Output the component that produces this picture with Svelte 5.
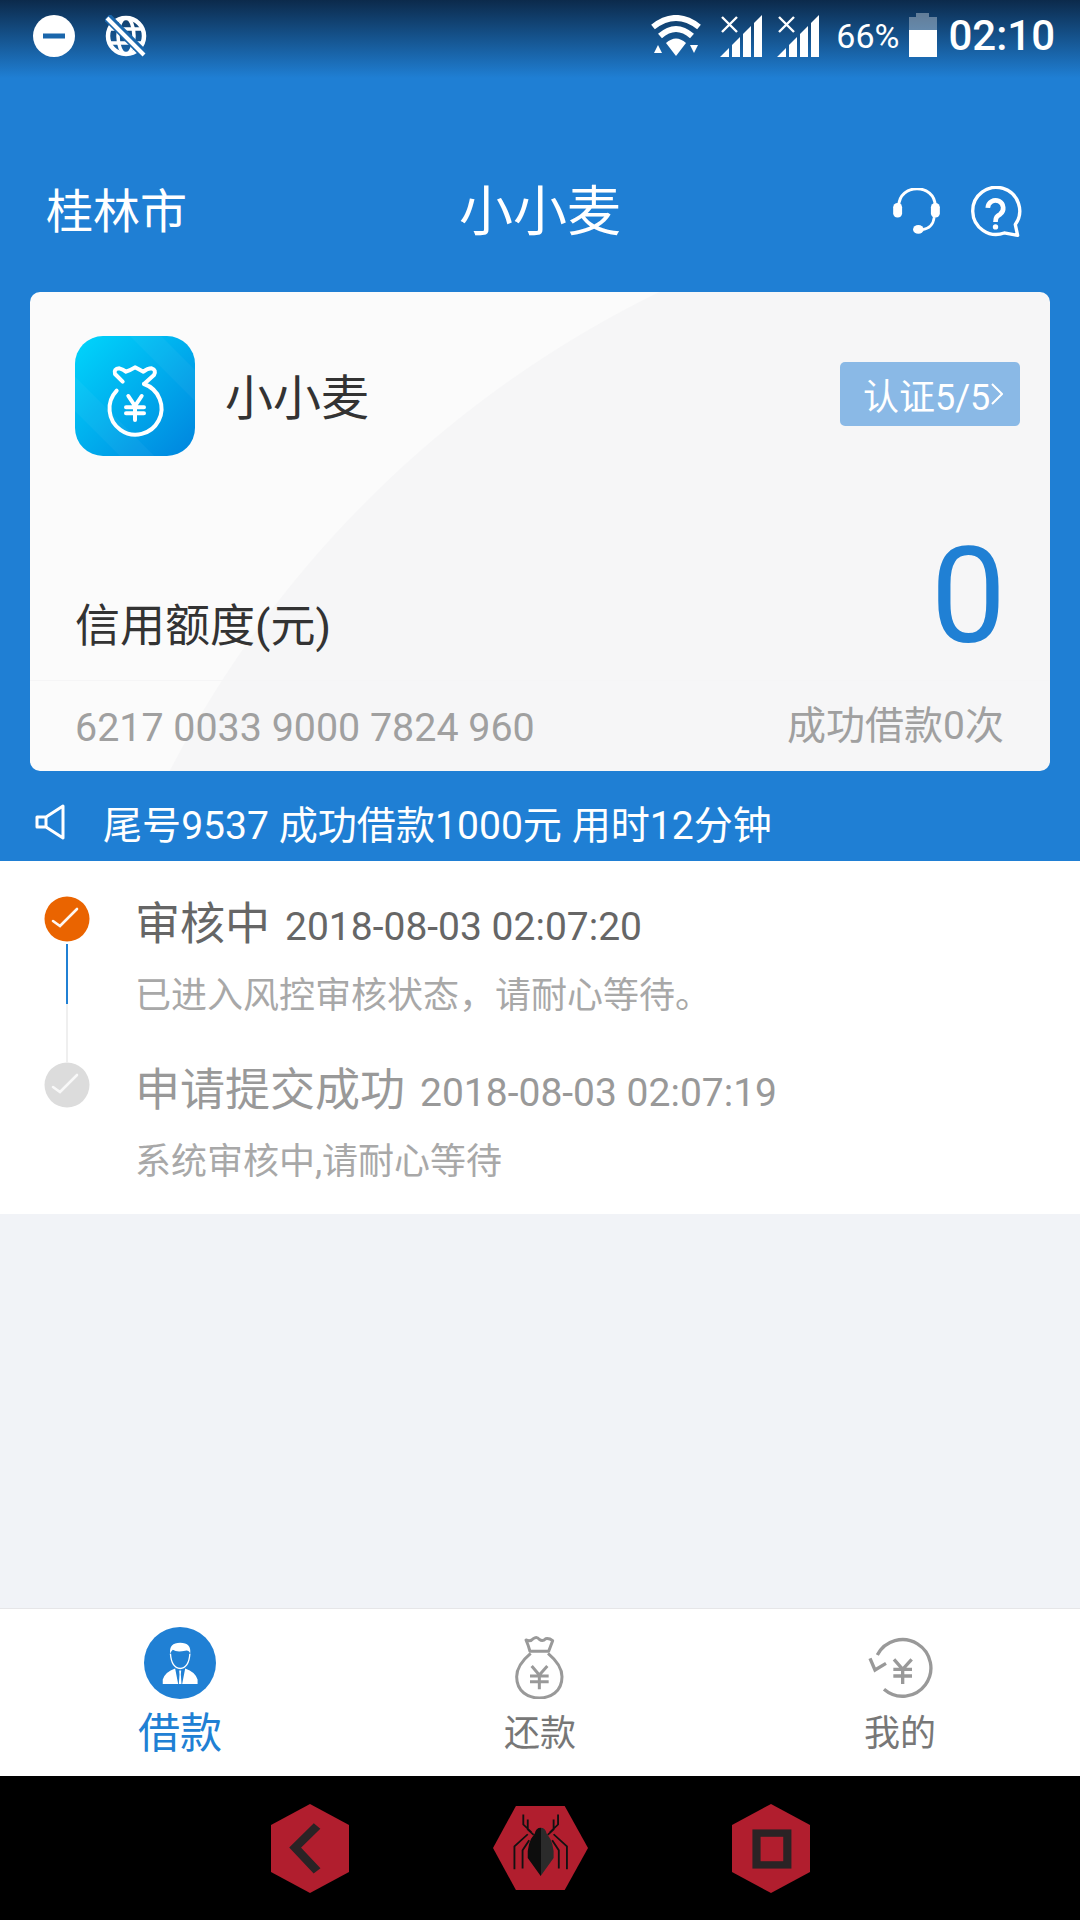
<script lang="ts">
	const steps = [
		{ title: '审核中', time: '2018-08-03 02:07:20', desc: '已进入风控审核状态，请耐心等待。', active: true },
		{ title: '申请提交成功', time: '2018-08-03 02:07:19', desc: '系统审核中,请耐心等待', active: false }
	];
	const signals = [0, 1];
</script>

<div class="page">
	<header class="hero">
		<div class="status">
			<div class="status-left">
				<svg width="42" height="42" viewBox="0 0 42 42">
					<circle cx="21" cy="21" r="21" fill="#fff" />
					<rect x="10" y="18.5" width="22" height="5" fill="#1a66ab" />
				</svg>
				<svg width="42" height="42" viewBox="0 0 42 42" fill="none" stroke="#fff">
					<circle cx="21" cy="21" r="18" stroke-width="4.5" />
					<ellipse cx="21" cy="21" rx="8" ry="18" stroke-width="3.5" />
					<path d="M4 14H38M4 28H38" stroke-width="3.5" />
					<path d="M2 2L40 40" stroke="#1a66ab" stroke-width="9" />
					<path d="M2 3L39 40" stroke-width="4" />
				</svg>
			</div>
			<div class="status-right">
				<svg class="wifi" width="52" height="42" viewBox="0 0 52 42">
					<g fill="none" stroke="#fff" stroke-width="6">
						<path d="M3 12Q26 -6 49 12" />
						<path d="M10 21Q26 7 42 21" />
					</g>
					<path d="M16 28Q26 19 36 28L26 41Z" fill="#fff" />
					<path d="M4 38L8 30L12 38ZM40 30H48L44 38Z" fill="#fff" />
				</svg>
				<div class="signals">
					{#each signals as s (s)}
						<svg width="42" height="42" viewBox="0 0 42 42">
							<path d="M0 42L9 33V42ZM12 30L20 22V42H12ZM23 19L31 11V42H23ZM34 8L42 0V42H34Z" fill="#fff" />
							<path d="M2 2L17 17M17 2L2 17" stroke="#fff" stroke-width="2.4" />
						</svg>
					{/each}
				</div>
				<span class="pct">66%</span>
				<svg class="battery" width="28" height="44" viewBox="0 0 28 44">
					<path d="M7 0H20V4H28V17H0V4H7Z" fill="#fff" opacity="0.35" />
					<rect y="17" width="28" height="27" fill="#fff" />
				</svg>
				<span class="clock">02:10</span>
			</div>
		</div>

		<div class="topbar">
			<span class="city">桂林市</span>
			<span class="app-title">小小麦</span>
			<div class="top-icons">
				<svg width="50" height="48" viewBox="40 50 150 145" fill="none" stroke="#fff">
					<path d="M60 105C60 35 170 35 170 105" stroke-width="9" />
					<rect x="43" y="95" width="27" height="44" rx="13" fill="#fff" stroke="none" />
					<rect x="157" y="95" width="27" height="44" rx="13" fill="#fff" stroke="none" />
					<path d="M130 176Q163 172 167 138" stroke-width="8" />
					<ellipse cx="119" cy="175" rx="16" ry="13" fill="#fff" stroke="none" />
				</svg>
				<svg width="52" height="52" viewBox="270 40 155 155" fill="none" stroke="#fff">
					<path d="M372 180A70 70 0 1 1 405 155L412 187Z" stroke-width="10" stroke-linejoin="round" />
					<path d="M323 105A23 23 0 1 1 360 124C350 130 346 134 346 147" stroke-width="14" />
					<circle cx="346" cy="162" r="8" fill="#fff" stroke="none" />
				</svg>
			</div>
		</div>

		<section class="card">
			<div class="card-top">
				<svg class="logo" width="120" height="120" viewBox="45 48 360 360">
					<defs>
						<linearGradient id="logo-bg" x1="0" y1="0" x2="1" y2="1">
							<stop offset="0" stop-color="#00d6fc" />
							<stop offset="1" stop-color="#0084de" />
						</linearGradient>
					</defs>
					<rect x="45" y="48" width="360" height="360" rx="84" fill="url(#logo-bg)" />
					<path d="M210 48L405 243V150L303 48ZM45 170L283 408H180L45 273Z" fill="#fff" opacity="0.04" />
					<g fill="none" stroke="#fff" stroke-width="12" stroke-linecap="round" stroke-linejoin="round">
						<path d="M170 212A78 78 0 1 0 252 192" />
						<path d="M188 185L165 162Q160 146 178 145Q190 148 198 155Q212 150 225 142Q240 150 250 155Q262 145 275 145Q290 150 282 165L252 192" />
						<path d="M205 228L225 258L245 228M198 262H252M198 280H252M225 258V300" />
					</g>
				</svg>
				<span class="card-name">小小麦</span>
				<span class="badge">认证5/5<svg width="12" height="24" viewBox="0 0 12 24" fill="none" stroke="#fff" stroke-width="2"><path d="M1 2L11 12L1 22" /></svg></span>
			</div>
			<div class="card-mid">
				<span class="limit-label">信用额度(元)</span>
				<span class="limit">0</span>
			</div>
			<div class="card-foot">
				<span class="card-no">6217 0033 9000 7824 960</span>
				<span class="count">成功借款0次</span>
			</div>
		</section>

		<div class="ticker">
			<svg width="30" height="36" viewBox="0 0 30 36" fill="none" stroke="#fff" stroke-width="3">
				<path d="M28 2L11 13H2V23H11L28 34Z" stroke-linejoin="round" />
				<path d="M11 13V23" />
			</svg>
			<span>尾号9537 成功借款1000元 用时12分钟</span>
		</div>
	</header>

	<section class="timeline">
		{#each steps as step, i}
			<div class="step" class:done={!step.active}>
				<div class="rail">
					<svg width="46" height="46" viewBox="0 0 46 46">
						<circle cx="23" cy="23" r="22.5" fill={step.active ? '#ea6400' : '#dcdcdc'} />
						<path d="M9 25L16 30L33 13" fill="none" stroke="#fff" stroke-width="2.6" stroke-linecap="round" opacity={step.active ? 0.95 : 0.8} />
					</svg>
					{#if i < steps.length - 1}
						<div class="line-on"></div>
						<div class="line-off"></div>
					{/if}
				</div>
				<div class="step-body">
					<div class="step-head">
						<span class="step-title">{step.title}</span>
						<span class="step-time">{step.time}</span>
					</div>
					<p class="step-desc">{step.desc}</p>
				</div>
			</div>
		{/each}
	</section>

	<div class="spacer"></div>

	<nav class="tabs">
		<div class="tab active">
			<svg width="72" height="72" viewBox="72 48 215 215">
				<circle cx="179.500" cy="155.500" r="107.500" fill="#2080d4" />
				<path d="M150 128Q146 95 180 95Q214 95 210 128Q206 116 195 119Q170 125 158 116Q153 120 150 128Z" fill="#fff" />
				<path d="M151 128Q154 170 180 172Q206 170 209 128" fill="none" stroke="#fff" stroke-width="4" />
				<path d="M128 218V205Q135 182 165 172L174 218ZM232 218V205Q225 182 195 172L186 218Z" fill="#fff" />
				<path d="M177 178H183L182 190L184 218H176L178 190Z" fill="#fff" />
			</svg>
			<span>借款</span>
		</div>
		<div class="tab">
			<svg width="72" height="72" viewBox="72 51 216 216" fill="none" stroke="#999" stroke-width="9" stroke-linejoin="round">
				<path d="M138 90Q152 96 160 86Q170 78 178 88Q188 96 197 86Q208 84 218 92Q212 108 206 124H150Q146 108 138 90Z" />
				<path d="M152 130Q110 165 110 200C110 245 145 264 178 264C211 264 246 245 246 200Q246 165 204 130" />
				<path d="M155 168L178 195L202 168M150 198H206M150 215H206M178 195V238" />
			</svg>
			<span>还款</span>
		</div>
		<div class="tab">
			<svg width="72" height="72" viewBox="1152 51 216 216" fill="none" stroke="#999" stroke-width="10">
				<path d="M1212 238A85 85 0 1 0 1192 135" />
				<path d="M1170 145L1185 180L1218 160" />
				<path d="M1242 148L1268 178L1295 148M1240 178H1296M1240 198H1296M1268 178V222" />
			</svg>
			<span>我的</span>
		</div>
	</nav>

	<div class="softkeys">
		<svg width="78" height="89" viewBox="58 42 210 266" preserveAspectRatio="none">
			<path d="M163 42L268 105V245L163 308L58 245V105Z" fill="#b11e2e" />
			<path d="M182 108L123 172L182 242" fill="none" stroke="#2a2325" stroke-width="24" />
		</svg>
		<svg width="95" height="84" viewBox="658 50 257 250" preserveAspectRatio="none">
			<defs>
				<linearGradient id="spider-body" x1="0" y1="0" x2="1" y2="0">
					<stop offset="0.5" stop-color="#0d0d0d" />
					<stop offset="0.5" stop-color="#2b2b2b" />
				</linearGradient>
			</defs>
			<path d="M720 50H852L915 175L852 300H720L658 175Z" fill="#b11e2e" />
			<g fill="none" stroke="#111" stroke-width="5">
				<path d="M740 75V105L762 128M752 90V120L768 136M716 238V170L752 134M738 236V182L756 152" />
				<path d="M834 75V105L812 128M822 90V120L806 136M858 238V170L822 134M836 236V182L818 152" />
			</g>
			<path d="M787 115Q800 115 803 132Q825 160 822 205L787 258L752 205Q749 160 771 132Q774 115 787 115Z" fill="url(#spider-body)" />
		</svg>
		<svg width="78" height="89" viewBox="1302 42 210 266" preserveAspectRatio="none">
			<path d="M1407 42L1512 105V245L1407 308L1302 245V105Z" fill="#b11e2e" />
			<rect x="1368" y="129" width="83" height="95" fill="none" stroke="#2a2325" stroke-width="22" />
		</svg>
	</div>
</div>

<style>
	:global(body) {
		margin: 0;
	}

	.page {
		width: 1080px;
		height: 1920px;
		display: flex;
		flex-direction: column;
		background: #f1f3f7;
		font-family: Roboto, 'Noto Sans CJK SC', sans-serif;
	}

	.hero {
		height: 861px;
		background: linear-gradient(to bottom, #0c2a4b 0, #1f7fd4 78px);
		color: #fff;
	}

	.status {
		height: 72px;
		display: flex;
		justify-content: space-between;
		padding: 15px 25px 0 33px;
		box-sizing: border-box;
	}

	.status-left {
		display: flex;
		gap: 30px;
	}

	.status-right {
		display: flex;
		align-items: flex-start;
	}

	.signals {
		display: flex;
		gap: 15px;
		margin-left: 18px;
	}

	.pct {
		font-size: 34px;
		line-height: 42px;
		margin-left: 17px;
	}

	.battery {
		margin: -2px 0 0 10px;
	}

	.clock {
		font-size: 42px;
		font-weight: 500;
		line-height: 42px;
		margin-left: 11px;
	}

	.topbar {
		height: 140px;
		margin-top: 65px;
		padding: 0 46px;
		display: grid;
		grid-template-columns: 1fr auto 1fr;
		align-items: center;
	}

	.city {
		font-size: 47px;
	}

	.app-title {
		font-size: 54px;
	}

	.top-icons {
		display: flex;
		justify-content: flex-end;
		align-items: center;
		gap: 28px;
		margin: 9px 12px 0 0;
	}

	.card {
		height: 479px;
		margin: 15px 30px 0;
		border-radius: 10px;
		display: flex;
		flex-direction: column;
		background: radial-gradient(circle 1089px at 1107px 978px, #f6f6f7 99.9%, #fbfbfb 100%);
		color: #333;
	}

	.card-top {
		display: flex;
		align-items: center;
		padding: 44px 30px 0 45px;
	}

	.card-name {
		font-size: 48px;
		margin: -5px 0 0 30px;
		flex: 1;
	}

	.badge {
		width: 180px;
		height: 64px;
		box-sizing: border-box;
		padding-left: 23px;
		display: flex;
		align-items: center;
		gap: 1px;
		border-radius: 5px;
		background: #8ab9e6;
		color: #fff;
		font-size: 36px;
		margin-top: -5px;
	}

	.card-mid {
		flex: 1;
		display: flex;
		justify-content: space-between;
		align-items: flex-end;
		padding: 0 44px 0 45px;
	}

	.limit-label {
		font-size: 45px;
		line-height: 60px;
		margin-bottom: 23px;
	}

	.limit {
		font-size: 134px;
		line-height: 140px;
		margin-bottom: 13px;
		color: #2080d4;
	}

	.card-foot {
		height: 90px;
		border-top: 1px solid #f5f5f6;
		display: flex;
		justify-content: space-between;
		align-items: center;
		padding: 0 46px 0 45px;
		color: #a0a0a0;
	}

	.card-no {
		font-size: 39.400px;
		margin-top: 2px;
	}

	.count {
		font-size: 39px;
		margin-bottom: 9px;
	}

	.ticker {
		display: flex;
		align-items: center;
		gap: 38px;
		height: 78px;
		padding: 12px 0 0 35px;
		font-size: 39.100px;
	}

	.timeline {
		height: 353px;
		box-sizing: border-box;
		padding: 35px 0 0 44px;
		background: #fff;
	}

	.step {
		display: flex;
		gap: 45px;
		height: 166px;
	}

	.rail {
		display: flex;
		flex-direction: column;
		align-items: center;
		width: 46px;
	}

	.line-on {
		width: 2px;
		height: 60px;
		margin-top: 2px;
		background: #2080d4;
	}

	.line-off {
		width: 2px;
		height: 58px;
		background: #efefef;
	}

	.step-body {
		padding-top: 1px;
	}

	.step-head {
		display: flex;
		align-items: baseline;
		gap: 15px;
		height: 56px;
		line-height: 56px;
		color: #666;
	}

	.step.done .step-head {
		color: #999;
	}

	.step-title {
		font-size: 45px;
	}

	.step-time {
		font-size: 39px;
	}

	.step-desc {
		margin: 18px 0 0;
		font-size: 36px;
		line-height: 50px;
		color: #a8a8a8;
	}

	.spacer {
		flex: 1;
	}

	.tabs {
		height: 168px;
		box-sizing: border-box;
		padding-top: 18px;
		border-top: 1px solid #e6e6e8;
		background: #fff;
		display: grid;
		grid-template-columns: repeat(3, 360px);
	}

	.tab {
		display: flex;
		flex-direction: column;
		align-items: center;
		gap: 10px;
		font-size: 36px;
		line-height: 50px;
		color: #777;
	}

	.tab.active {
		font-size: 42px;
		color: #2080d4;
	}

	.softkeys {
		height: 144px;
		background: #000;
		display: flex;
		justify-content: center;
		align-items: center;
		gap: 144px;
	}
</style>
